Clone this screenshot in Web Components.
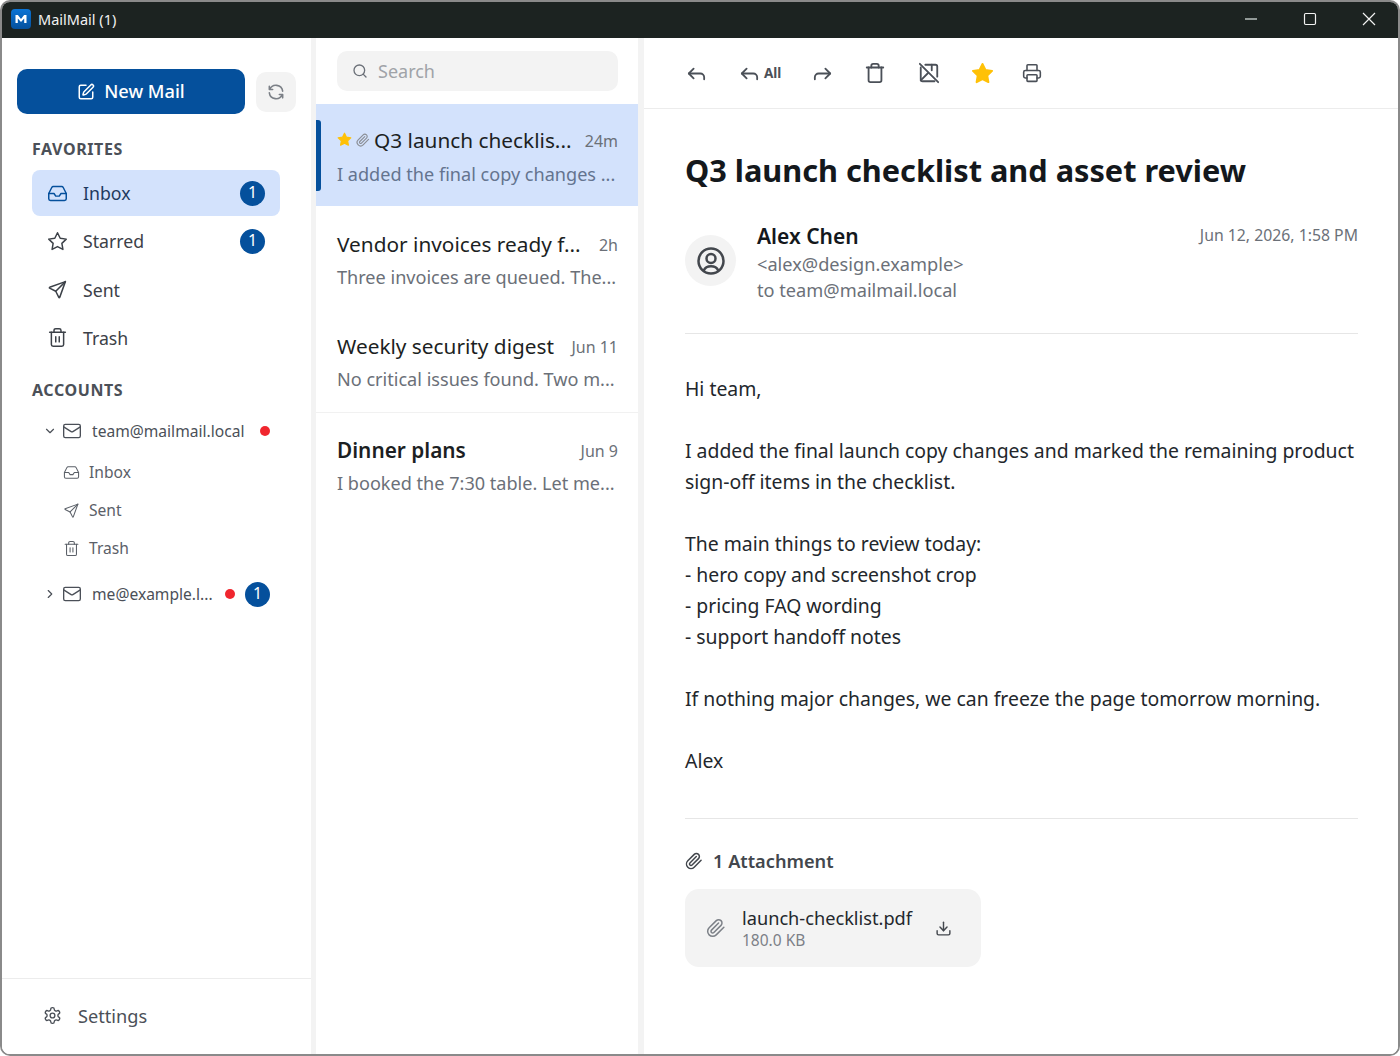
<!DOCTYPE html>
<html>
<head>
<meta charset="utf-8">
<title>MailMail</title>
<style>
html, body { margin: 0; height: 100%; background: #fff; }
body { font-family: "Noto Sans", sans-serif; color: #1f2328; overflow: hidden; }
</style>
</head>
<body>
<mail-app></mail-app>

<script>
const ICONS = {
    pen: '<path d="M12 3H5a2 2 0 0 0-2 2v14a2 2 0 0 0 2 2h14a2 2 0 0 0 2-2v-7"/><path d="M18.375 2.625a1 1 0 0 1 3 3l-9.013 9.014a2 2 0 0 1-.853.505l-2.873.84a.5.5 0 0 1-.62-.62l.84-2.873a2 2 0 0 1 .506-.852z"/>',
    refresh: '<path d="M20 11a8.1 8.1 0 0 0-15.5-2m-.5-4v4h4"/><path d="M4 13a8.1 8.1 0 0 0 15.5 2m.5 4v-4h-4"/>',
    inbox: '<polyline points="22 12 16 12 14 15 10 15 8 12 2 12"/><path d="M5.45 5.11 2 12v6a2 2 0 0 0 2 2h16a2 2 0 0 0 2-2v-6l-3.45-6.89A2 2 0 0 0 16.76 4H7.24a2 2 0 0 0-1.79 1.11z"/>',
    star: '<polygon points="12 2 15.09 8.26 22 9.27 17 14.14 18.18 21.02 12 17.77 5.82 21.02 7 14.14 2 9.27 8.91 8.26 12 2"/>',
    send: '<path d="M10 14 21 3"/><path d="M21 3l-6.5 18a.55.55 0 0 1-1 0l-3.5-7-7-3.5a.55.55 0 0 1 0-1z"/>',
    trash: '<path d="M3 6h18"/><path d="M19 6v14a2 2 0 0 1-2 2H7a2 2 0 0 1-2-2V6"/><path d="M8 6V4a2 2 0 0 1 2-2h4a2 2 0 0 1 2 2v2"/><path d="M10 11v6"/><path d="M14 11v6"/>',
    bin: '<path d="M3 6h18"/><path d="M19 6v14a2 2 0 0 1-2 2H7a2 2 0 0 1-2-2V6"/><path d="M8 6V4a2 2 0 0 1 2-2h4a2 2 0 0 1 2 2v2"/>',
    mail: '<rect x="2" y="4" width="20" height="16" rx="2"/><path d="m22 7-8.97 5.7a1.94 1.94 0 0 1-2.06 0L2 7"/>',
    down: '<path d="m6 9 6 6 6-6"/>',
    right: '<path d="m9 18 6-6-6-6"/>',
    search: '<circle cx="11" cy="11" r="8"/><path d="m21 21-4.3-4.3"/>',
    clip: '<path d="m21.44 11.05-9.19 9.19a6 6 0 0 1-8.49-8.49l8.57-8.57A4 4 0 1 1 18 8.84l-8.59 8.57a2 2 0 0 1-2.83-2.83l8.49-8.48"/>',
    reply: '<polyline points="9 17 4 12 9 7"/><path d="M20 18v-2a4 4 0 0 0-4-4H4"/>',
    forward: '<polyline points="15 17 20 12 15 7"/><path d="M4 18v-2a4 4 0 0 1 4-4h12"/>',
    spam: '<path d="M8 3h11a2 2 0 0 1 2 2v11"/><path d="M3 6v13a2 2 0 0 0 2 2h13"/><path d="M2 2l20 20"/><path d="M3 20l8-8"/><path d="M15 3v6"/>',
    printer: '<path d="M6 18H4a2 2 0 0 1-2-2v-5a2 2 0 0 1 2-2h16a2 2 0 0 1 2 2v5a2 2 0 0 1-2 2h-2"/><path d="M6 9V3a1 1 0 0 1 1-1h10a1 1 0 0 1 1 1v6"/><rect x="6" y="14" width="12" height="8" rx="1"/>',
    user: '<circle cx="12" cy="12" r="10"/><circle cx="12" cy="10" r="3.6"/><path d="M6.2 19.6c1-2.3 3-3.4 5.8-3.4s4.800 1.100 5.800 3.400"/>',
    gear: '<path d="M12.22 2h-.44a2 2 0 0 0-2 2v.18a2 2 0 0 1-1 1.730l-.43.250a2 2 0 0 1-2 0l-.15-.08a2 2 0 0 0-2.730.730l-.22.380a2 2 0 0 0 .730 2.730l.15.100a2 2 0 0 1 1 1.720v.510a2 2 0 0 1-1 1.740l-.15.090a2 2 0 0 0-.730 2.730l.22.380a2 2 0 0 0 2.730.730l.15-.08a2 2 0 0 1 2 0l.43.250a2 2 0 0 1 1 1.730V20a2 2 0 0 0 2 2h.44a2 2 0 0 0 2-2v-.18a2 2 0 0 1 1-1.730l.43-.25a2 2 0 0 1 2 0l.15.08a2 2 0 0 0 2.730-.730l.22-.390a2 2 0 0 0-.730-2.730l-.15-.08a2 2 0 0 1-1-1.740v-.5a2 2 0 0 1 1-1.740l.15-.09a2 2 0 0 0 .730-2.730l-.22-.38a2 2 0 0 0-2.730-.730l-.15.08a2 2 0 0 1-2 0l-.43-.25a2 2 0 0 1-1-1.730V4a2 2 0 0 0-2-2z"/><circle cx="12" cy="12" r="3"/>',
    download: '<path d="M21 15v4a2 2 0 0 1-2 2H5a2 2 0 0 1-2-2v-4"/><polyline points="7 10 12 15 17 10"/><line x1="12" y1="15" x2="12" y2="3"/>'
};

class MailIcon extends HTMLElement {
    connectedCallback() {
        const size = this.getAttribute('size') || 20;
        const stroke = this.getAttribute('stroke') || 2;
        const fill = this.getAttribute('fill') || 'none';
        this.attachShadow({ mode: 'open' }).innerHTML = `
            <style>
                :host { display: inline-flex; flex: none; width: ${size}px; height: ${size}px; }
                svg { width: 100%; height: 100%; }
            </style>
            <svg viewBox="0 0 24 24" fill="${fill}" stroke="currentColor" stroke-width="${stroke}"
                 stroke-linecap="round" stroke-linejoin="round">${ICONS[this.getAttribute('name')]}</svg>
        `;
    }
}
customElements.define('mail-icon', MailIcon);

class CountBadge extends HTMLElement {
    connectedCallback() {
        this.attachShadow({ mode: 'open' }).innerHTML = `
            <style>
                :host {
                    display: inline-flex; flex: none; width: 25px; height: 25px; border-radius: 50%;
                    align-items: center; justify-content: center; box-sizing: border-box; padding-bottom: 2px;
                    background: #05509c; color: #fff; font-size: 16px;
                }
            </style>
            <slot></slot>
        `;
    }
}
customElements.define('count-badge', CountBadge);

class TitleBar extends HTMLElement {
    connectedCallback() {
        this.attachShadow({ mode: 'open' }).innerHTML = `
            <style>
                :host {
                    display: flex; align-items: center; height: 36px; flex: none;
                    box-sizing: border-box; padding-bottom: 2px;
                    background: #1c2321; color: #f2f2f2; font-size: 14.500px;
                }
                .logo {
                    width: 20px; height: 20px; margin: 0 7px 0 9px; border-radius: 4px;
                    background: linear-gradient(#0a74d6, #05509c);
                    display: flex; align-items: center; justify-content: center;
                }
                .name { flex: 1; }
                .ctl { width: 59px; display: flex; justify-content: center; }
                svg { width: 14px; height: 14px; display: block; }
            </style>
            <div class="logo"><svg viewBox="0 0 14 14"><path d="M1.500 11V3h2.400L7 7l3.100-4h2.400v8h-2.300V6.600L7 10 3.800 6.600V11z" fill="#fff"/></svg></div>
            <div class="name">MailMail (1)</div>
            <div class="ctl"><svg viewBox="0 0 14 14"><path d="M1 7h12" stroke="#b9c2bf" stroke-width="1.300"/></svg></div>
            <div class="ctl"><svg viewBox="0 0 14 14"><rect x="1.500" y="1.500" width="11" height="11" rx="1.200" fill="none" stroke="#f2f2f2" stroke-width="1.200"/></svg></div>
            <div class="ctl"><svg viewBox="0 0 14 14"><path d="M1 1l12 12M13 1 1 13" stroke="#f2f2f2" stroke-width="1.200"/></svg></div>
        `;
    }
}
customElements.define('title-bar', TitleBar);

class NavItem extends HTMLElement {
    connectedCallback() {
        this.attachShadow({ mode: 'open' }).innerHTML = `
            <style>
                :host {
                    display: flex; align-items: center; height: 46px; margin-bottom: 2.300px;
                    padding: 0 15px 0 15px; gap: 15px; border-radius: 8px;
                    font-size: 17.700px; color: #3c4148;
                }
                :host([active]) { background: #d3e2fc; color: #1f3a5f; }
                :host([active]) mail-icon { color: #05509c; }
                .label { flex: 1; }
            </style>
            <mail-icon name="${this.getAttribute('icon')}" size="21" stroke="1.700"></mail-icon>
            <span class="label"><slot></slot></span>
            <slot name="end"></slot>
        `;
    }
}
customElements.define('nav-item', NavItem);

class AccountRow extends HTMLElement {
    connectedCallback() {
        const open = this.hasAttribute('open');
        this.attachShadow({ mode: 'open' }).innerHTML = `
            <style>
                :host {
                    display: flex; align-items: center; height: 38px; padding-left: 11px;
                    font-size: 15.600px; color: #4b5058;
                }
                .text { margin-left: 10px; width: var(--text-width, 152px); white-space: nowrap; }
                .dot { width: 10px; height: 10px; border-radius: 50%; background: #f0262e; margin-left: 16px; flex: none; }
                ::slotted(count-badge) { margin-left: 10px; }
            </style>
            <mail-icon name="${open ? 'down' : 'right'}" size="14" stroke="2"></mail-icon>
            <mail-icon name="mail" size="20" stroke="1.600" style="margin-left:5px"></mail-icon>
            <span class="text"><slot></slot></span>
            <span class="dot"></span>
            <slot name="end"></slot>
        `;
    }
}
customElements.define('account-row', AccountRow);

class SubItem extends HTMLElement {
    connectedCallback() {
        this.attachShadow({ mode: 'open' }).innerHTML = `
            <style>
                :host {
                    display: flex; align-items: center; height: 38px; padding-left: 31px; gap: 9px;
                    font-size: 15.600px; color: #5b6068;
                }
            </style>
            <mail-icon name="${this.getAttribute('icon')}" size="17" stroke="1.500"></mail-icon>
            <slot></slot>
        `;
    }
}
customElements.define('sub-item', SubItem);

class SideBar extends HTMLElement {
    connectedCallback() {
        this.attachShadow({ mode: 'open' }).innerHTML = `
            <style>
                :host {
                    display: flex; flex-direction: column; width: 309px; flex: none; background: #fff;
                }
                .top { display: flex; align-items: center; gap: 11px; padding: 31px 15px 0; }
                .compose {
                    width: 228px; height: 45px; border-radius: 10px; background: #05509c; color: #fff;
                    display: flex; align-items: center; justify-content: center; gap: 9px;
                    font-size: 18.200px; font-weight: 500;
                }
                .compose span { position: relative; top: -1px; }
                .sync {
                    width: 40px; height: 40px; border-radius: 10px; background: #f3f3f3; color: #7c8087;
                    display: flex; align-items: center; justify-content: center;
                }
                h2 {
                    margin: 0; padding: 0 30px; font-size: 16px; line-height: 22px; font-weight: 700;
                    color: #4b5058; letter-spacing: .6px;
                }
                .fav { margin-top: 24px; }
                .nav { margin: 10px 31px 0 30px; }
                .acc { margin-top: 16px; }
                .tree { margin: 11px 0 0 30px; }
                .tree account-row:first-child { margin-bottom: 3px; }
                .tree account-row:last-child { margin-top: 8px; }
                .grow { flex: 1; }
                .foot {
                    height: 76px; box-sizing: border-box; padding: 0 0 2px 41px; border-top: 1px solid #ececec;
                    display: flex; align-items: center; gap: 16px; font-size: 18.200px; color: #4b5058;
                }
            </style>
            <div class="top">
                <div class="compose"><mail-icon name="pen" size="18" stroke="2"></mail-icon><span>New Mail</span></div>
                <div class="sync"><mail-icon name="refresh" size="20" stroke="1.900"></mail-icon></div>
            </div>
            <h2 class="fav">FAVORITES</h2>
            <div class="nav">
                <nav-item icon="inbox" active>Inbox<count-badge slot="end">1</count-badge></nav-item>
                <nav-item icon="star">Starred<count-badge slot="end">1</count-badge></nav-item>
                <nav-item icon="send">Sent</nav-item>
                <nav-item icon="trash">Trash</nav-item>
            </div>
            <h2 class="acc">ACCOUNTS</h2>
            <div class="tree">
                <account-row open>team@mailmail.local</account-row>
                <sub-item icon="inbox">Inbox</sub-item>
                <sub-item icon="send">Sent</sub-item>
                <sub-item icon="trash">Trash</sub-item>
                <account-row style="--text-width:117px">me@example.l...<count-badge slot="end">1</count-badge></account-row>
            </div>
            <div class="grow"></div>
            <div class="foot"><mail-icon name="gear" size="19" stroke="1.700"></mail-icon>Settings</div>
        `;
    }
}
customElements.define('side-bar', SideBar);

class MailRow extends HTMLElement {
    connectedCallback() {
        const flags = this.hasAttribute('flagged') ? `
            <mail-icon name="star" size="15" fill="#ffc107" style="color:#ffc107"></mail-icon>
            <mail-icon name="clip" size="14" stroke="2" style="color:#8b8f96;margin-left:4px"></mail-icon>` : '';
        this.attachShadow({ mode: 'open' }).innerHTML = `
            <style>
                :host {
                    display: block; position: relative; height: var(--row-height, 102px); box-sizing: border-box;
                    padding: var(--row-top, 21px) 20px 0 21px;
                }
                :host([active]) { background: #d3e2fc; }
                :host([active]) .bar {
                    position: absolute; left: 0; top: 16px; width: 5px; height: 71px;
                    background: #05509c; border-radius: 0 3px 3px 0;
                }
                .head { display: flex; align-items: center; height: 33px; }
                .subject {
                    flex: 1; font-size: 20.800px; color: #1c1f23; white-space: nowrap; margin-left: ${flags ? 4 : 0}px;
                }
                :host([unread]) .subject { font-weight: 600; }
                .time { font-size: 16px; color: #6b7078; white-space: nowrap; padding-top: 3px; }
                .preview { font-size: 18.100px; line-height: 33px; color: #6b7078; white-space: nowrap; margin-top: var(--preview-gap, 1px); }
                :host([active]) .preview { color: #64748f; }
            </style>
            <div class="bar"></div>
            <div class="head">${flags}<span class="subject"><slot name="subject"></slot></span><span class="time"><slot name="time"></slot></span></div>
            <div class="preview"><slot></slot></div>
        `;
    }
}
customElements.define('mail-row', MailRow);

class MailList extends HTMLElement {
    connectedCallback() {
        this.attachShadow({ mode: 'open' }).innerHTML = `
            <style>
                :host { display: block; width: 322px; flex: none; background: #fff; }
                .search-wrap { padding: 13px 20px 13px 21px; }
                .search {
                    height: 40px; border-radius: 10px; background: #f3f3f3; color: #a0a3a8;
                    display: flex; align-items: center; gap: 10px; padding-left: 15px; font-size: 18px;
                }
                .search mail-icon { color: #6b7078; }
                .rule { height: 1px; background: #f1f1f1; }
            </style>
            <div class="search-wrap">
                <div class="search"><mail-icon name="search" size="16" stroke="2"></mail-icon>Search</div>
            </div>
            <mail-row active flagged style="--row-top:19px;--preview-gap:2px">
                <span slot="subject">Q3 launch checklis...</span><span slot="time">24m</span>
                I added the final copy changes ...
            </mail-row>
            <mail-row>
                <span slot="subject">Vendor invoices ready f...</span><span slot="time">2h</span>
                Three invoices are queued. The...
            </mail-row>
            <mail-row style="--row-height:104px">
                <span slot="subject">Weekly security digest</span><span slot="time">Jun 11</span>
                No critical issues found. Two m...
            </mail-row>
            <div class="rule"></div>
            <mail-row unread style="--row-top:20px">
                <span slot="subject">Dinner plans</span><span slot="time">Jun 9</span>
                I booked the 7:30 table. Let me...
            </mail-row>
        `;
    }
}
customElements.define('mail-list', MailList);

class ReaderPane extends HTMLElement {
    connectedCallback() {
        this.attachShadow({ mode: 'open' }).innerHTML = `
            <style>
                :host { display: flex; flex-direction: column; flex: 1; min-width: 0; background: #fff; }
                .tools {
                    height: 71px; flex: none; box-sizing: border-box; border-bottom: 1px solid #ececec;
                    display: flex; align-items: center; padding-left: 41px; color: #4b5058;
                }
                .tools > * { flex: none; }
                .all { display: flex; align-items: center; gap: 3px; font-size: 13.500px; font-weight: 700; }
                .content { padding: 0 40px 0 41px; }
                h1 { margin: 38px 0 0; font-size: 30.700px; line-height: 46px; font-weight: 700; color: #14181c; }
                .from { display: flex; margin-top: 29px; padding-bottom: 30px; border-bottom: 1px solid #e6e6e6; }
                .avatar {
                    width: 51px; height: 51px; border-radius: 50%; background: #f3f3f3; color: #43474d;
                    display: flex; align-items: center; justify-content: center; margin-top: 13px; flex: none;
                }
                .who { margin-left: 21px; flex: 1; font-size: 18.200px; line-height: 26px; color: #6b7078; }
                .who b { display: block; font-size: 21px; line-height: 29px; font-weight: 600; color: #14181c; }
                .date { font-size: 15.800px; line-height: 24px; color: #6b7078; padding-top: 1px; }
                .body { padding: 39px 0 42px; font-size: 19.400px; line-height: 31px; color: #23272c; border-bottom: 1px solid #e6e6e6; }
                .body p { margin: 0 0 31px; }
                .body p:last-child { margin: 0; }
                .att-head {
                    display: flex; align-items: center; gap: 10px; margin-top: 28px; font-size: 18.200px;
                    line-height: 28px; font-weight: 600; color: #43474d;
                }
                .file {
                    display: flex; align-items: center; width: 296px; height: 78px; margin-top: 14px; box-sizing: border-box;
                    background: #f3f3f3; border-radius: 14px; padding: 0 29px 0 21px;
                }
                .file-text { flex: 1; margin-left: 16px; }
                .file-name { font-size: 18.200px; line-height: 25px; color: #23272c; }
                .file-size { font-size: 15.500px; line-height: 19px; color: #7c8087; }
                .file > mail-icon:first-child { color: #7c8087; }
                .file > mail-icon:last-child { color: #43474d; }
            </style>
            <div class="tools">
                <mail-icon name="reply" size="23" stroke="1.900"></mail-icon>
                <span class="all" style="margin-left:30px"><mail-icon name="reply" size="23" stroke="1.900"></mail-icon>All</span>
                <mail-icon name="forward" size="23" stroke="1.900" style="margin-left:29.500px"></mail-icon>
                <mail-icon name="bin" size="22" stroke="2" style="margin-left:30.500px"></mail-icon>
                <mail-icon name="spam" size="22" stroke="2" style="margin-left:32px"></mail-icon>
                <mail-icon name="star" size="23" fill="#ffc107" style="margin-left:31px;color:#ffc107"></mail-icon>
                <mail-icon name="printer" size="20" stroke="1.900" style="margin-left:28px"></mail-icon>
            </div>
            <div class="content">
                <h1>Q3 launch checklist and asset review</h1>
                <div class="from">
                    <div class="avatar"><mail-icon name="user" size="30" stroke="2"></mail-icon></div>
                    <div class="who">
                        <b>Alex Chen</b>
                        <div>&lt;alex@design.example&gt;</div>
                        <div>to team@mailmail.local</div>
                    </div>
                    <div class="date">Jun 12, 2026, 1:58 PM</div>
                </div>
                <div class="body">
                    <p>Hi team,</p>
                    <p>I added the final launch copy changes and marked the remaining product sign-off items in the checklist.</p>
                    <p>The main things to review today:<br>- hero copy and screenshot crop<br>- pricing FAQ wording<br>- support handoff notes</p>
                    <p>If nothing major changes, we can freeze the page tomorrow morning.</p>
                    <p>Alex</p>
                </div>
                <div class="att-head"><mail-icon name="clip" size="18" stroke="2"></mail-icon>1 Attachment</div>
                <div class="file">
                    <mail-icon name="clip" size="20" stroke="1.800"></mail-icon>
                    <div class="file-text">
                        <div class="file-name">launch-checklist.pdf</div>
                        <div class="file-size">180.0 KB</div>
                    </div>
                    <mail-icon name="download" size="17" stroke="2"></mail-icon>
                </div>
            </div>
        `;
    }
}
customElements.define('reader-pane', ReaderPane);

class MailApp extends HTMLElement {
    connectedCallback() {
        this.attachShadow({ mode: 'open' }).innerHTML = `
            <style>
                :host { display: block; height: 1056px; background: #fff; font-family: "Noto Sans", sans-serif; }
                .window {
                    display: flex; flex-direction: column; height: 100%; box-sizing: border-box;
                    border: 2px solid #8a8a8a; border-radius: 10px; overflow: hidden;
                }
                .panes { flex: 1; min-height: 0; display: flex; background: #f3f3f3; gap: 5px; }
                mail-list { margin-right: 1px; }
            </style>
            <div class="window">
                <title-bar></title-bar>
                <div class="panes">
                    <side-bar></side-bar>
                    <mail-list></mail-list>
                    <reader-pane></reader-pane>
                </div>
            </div>
        `;
    }
}
customElements.define('mail-app', MailApp);
</script>
</body>
</html>
